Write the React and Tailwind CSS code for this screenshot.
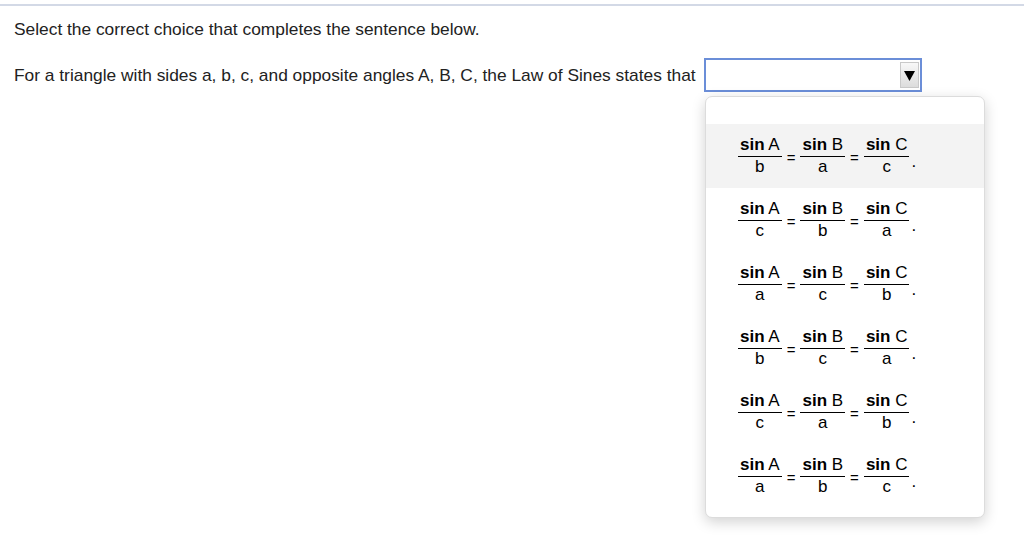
import React from "react";

const options = [
  ["b", "a", "c"],
  ["c", "b", "a"],
  ["a", "c", "b"],
  ["b", "c", "a"],
  ["c", "a", "b"],
  ["a", "b", "c"],
];

function Frac({ letter, den }) {
  return (
    <span className="inline-flex flex-col items-stretch">
      <span className="px-[2px] text-center leading-[19px] whitespace-nowrap">
        <b>sin</b> {letter}
      </span>
      <span className="mt-[2px] h-px bg-black" />
      <span className="text-center leading-[20px]">{den}</span>
    </span>
  );
}

function Eq() {
  return <span className="mx-[5px] mt-[2px] text-[15px] leading-none">=</span>;
}

function Row({ dens, active }) {
  return (
    <div className={`flex h-16 items-center pl-[32px] ${active ? "bg-[#f3f3f3]" : ""}`}>
      <Frac letter="A" den={dens[0]} />
      <Eq />
      <Frac letter="B" den={dens[1]} />
      <Eq />
      <Frac letter="C" den={dens[2]} />
      <span className="ml-[2px] mt-[10px] leading-none">.</span>
    </div>
  );
}

export default function App() {
  return (
    <div
      className="relative h-[543px] w-[1024px] overflow-hidden bg-white text-[17.35px] text-[#222]"
      style={{ fontFamily: '"Liberation Sans", Arial, sans-serif' }}
    >
      <div className="mt-[4px] h-[2px] bg-[#d3d9e6]" />
      <div className="pl-[14px] pt-[13px] leading-[20px]">
        Select the correct choice that completes the sentence below.
      </div>
      <div className="mt-[19px] flex items-center pl-[14px]">
        <span className="leading-[20px]">
          For a triangle with sides a, b, c, and opposite angles A, B, C, the Law of Sines states that
        </span>
        <div className="ml-[8px] flex h-[34px] w-[218px] items-center justify-end border-2 border-[#6b8ed8] bg-white pr-[1px]">
          <div className="flex h-[26px] w-[19px] items-center justify-center border border-[#c9c9c9] bg-gradient-to-b from-[#f8f8f8] to-[#dcdcdc]">
            <svg width="11" height="11" viewBox="0 0 11 11">
              <polygon points="0,1 11,1 5.5,11" fill="#000" />
            </svg>
          </div>
        </div>
      </div>
      <div className="absolute left-[705px] top-[96px] w-[280px] rounded-[7px] border border-[#dcdcdc] bg-white pb-[9px] text-[17px] text-black shadow-[0_4px_14px_rgba(0,0,0,0.18)]">
        <div className="h-[27px]" />
        {options.map((d, i) => (
          <Row key={i} dens={d} active={i === 0} />
        ))}
      </div>
    </div>
  );
}
